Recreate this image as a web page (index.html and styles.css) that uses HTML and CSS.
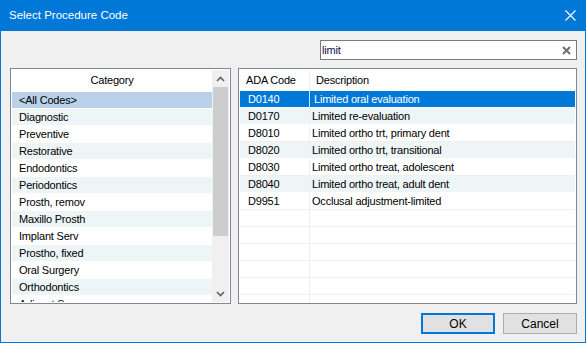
FILE: index.html
```html
<!DOCTYPE html>
<html lang="en">
<head>
    <meta charset="UTF-8">
    <title>Select Procedure Code</title>
    <link rel="stylesheet" href="styles.css">
</head>
<body>
    <div class="window">
        <div class="titlebar">
            <span class="title">Select Procedure Code</span>
            <svg class="close" width="11" height="11" viewBox="0 0 11 11">
                <path d="M0.5 0.5 L10.5 10.5 M10.5 0.5 L0.5 10.5" stroke="#fff" stroke-width="1.1"/>
            </svg>
        </div>

        <div class="content">
            <div class="searchRow">
                <div class="search">
                    <span class="searchText">limit</span>
                    <svg class="clear" width="9" height="9" viewBox="0 0 9 9">
                        <path d="M1 1 L8 8 M8 1 L1 8" stroke="#6e6e6e" stroke-width="2"/>
                    </svg>
                </div>
            </div>

            <div class="panels">
                <div class="panel categories">
                    <div class="catList">
                        <div class="catHeader">Category</div>
                        <div class="catRow selected">&lt;All Codes&gt;</div>
                        <div class="catRow alt">Diagnostic</div>
                        <div class="catRow">Preventive</div>
                        <div class="catRow alt">Restorative</div>
                        <div class="catRow">Endodontics</div>
                        <div class="catRow alt">Periodontics</div>
                        <div class="catRow">Prosth, remov</div>
                        <div class="catRow alt">Maxillo Prosth</div>
                        <div class="catRow">Implant Serv</div>
                        <div class="catRow alt">Prostho, fixed</div>
                        <div class="catRow">Oral Surgery</div>
                        <div class="catRow alt">Orthodontics</div>
                        <div class="catRow">Adjunct Serv</div>
                    </div>
                    <div class="scrollbar">
                        <div class="arrow">
                            <svg width="9" height="6" viewBox="0 0 9 6"><path d="M1 5 L4.5 1.5 L8 5" fill="none" stroke="#606060" stroke-width="1.6"/></svg>
                        </div>
                        <div class="track"><div class="thumb"></div></div>
                        <div class="arrow">
                            <svg width="9" height="6" viewBox="0 0 9 6"><path d="M1 1 L4.5 4.5 L8 1" fill="none" stroke="#606060" stroke-width="1.6"/></svg>
                        </div>
                    </div>
                </div>

                <div class="panel codes">
                    <div class="codeHeader">
                        <div class="colCode">ADA Code</div>
                        <div class="colDesc">Description</div>
                    </div>
                    <div class="codeRow selected"><div class="colCode">D0140</div><div class="colDesc">Limited oral evaluation</div></div>
                    <div class="codeRow alt"><div class="colCode">D0170</div><div class="colDesc">Limited re-evaluation</div></div>
                    <div class="codeRow"><div class="colCode">D8010</div><div class="colDesc">Limited ortho trt, primary dent</div></div>
                    <div class="codeRow alt"><div class="colCode">D8020</div><div class="colDesc">Limited ortho trt, transitional</div></div>
                    <div class="codeRow"><div class="colCode">D8030</div><div class="colDesc">Limited ortho treat, adolescent</div></div>
                    <div class="codeRow alt"><div class="colCode">D8040</div><div class="colDesc">Limited ortho treat, adult dent</div></div>
                    <div class="codeRow"><div class="colCode">D9951</div><div class="colDesc">Occlusal adjustment-limited</div></div>
                    <div class="codeRow empty"><div class="colCode"></div><div class="colDesc"></div></div>
                    <div class="codeRow empty"><div class="colCode"></div><div class="colDesc"></div></div>
                    <div class="codeRow empty"><div class="colCode"></div><div class="colDesc"></div></div>
                    <div class="codeRow empty"><div class="colCode"></div><div class="colDesc"></div></div>
                    <div class="codeRow empty"><div class="colCode"></div><div class="colDesc"></div></div>
                    <div class="codeRow empty"><div class="colCode"></div><div class="colDesc"></div></div>
                </div>
            </div>

            <div class="buttons">
                <button class="btn default">OK</button>
                <button class="btn">Cancel</button>
            </div>
        </div>
    </div>
</body>
</html>
```

FILE: styles.css
```css
body {
    margin: 0;
    font-family: "Liberation Sans", Arial, sans-serif;
    font-size: 11px;
    letter-spacing: -0.2px;
    color: #000;
    background: #f0f0f0;
}
.window {
    width: 586px;
    height: 343px;
    box-sizing: border-box;
    border: 1px solid #0078d7;
    border-top: none;
    background: #f0f0f0;
    overflow: hidden;
}
.titlebar {
    height: 31px;
    background: #0078d7;
    display: flex;
    align-items: center;
    justify-content: space-between;
    padding: 0 9px 1px 8px;
    box-sizing: border-box;
}
.title {
    color: #fff;
    font-size: 11.5px;
    letter-spacing: 0;
}
.content {
    padding: 9px 8px 0 9px;
}
.searchRow {
    display: flex;
    justify-content: flex-end;
    margin-bottom: 8px;
}
.search {
    width: 257px;
    height: 20px;
    box-sizing: border-box;
    border: 1px solid #7a7a7a;
    background: #fff;
    display: flex;
    align-items: center;
    justify-content: space-between;
    padding: 0 5px 0 1px;
}
.searchText {
    color: #10104a;
}
.panels {
    display: flex;
    gap: 7px;
    height: 236px;
}
.panel {
    box-sizing: border-box;
    border: 1px solid #828790;
    background: #fff;
    padding: 1px;
    overflow: hidden;
}
.categories {
    width: 221px;
    display: flex;
}
.catList {
    width: 200px;
    overflow: hidden;
}
.catHeader {
    height: 22px;
    line-height: 20px;
    text-align: center;
}
.catRow {
    height: 16px;
    line-height: 16px;
    border-bottom: 1px solid #fff;
    padding-left: 7px;
    white-space: nowrap;
}
.catRow.alt {
    background: #edf5f7;
}
.catRow.selected {
    background: #bad1ea;
}
.scrollbar {
    width: 17px;
    background: #f0f0f0;
    display: flex;
    flex-direction: column;
}
.arrow {
    height: 17px;
    display: flex;
    align-items: center;
    justify-content: center;
}
.track {
    flex: 1;
    padding: 0 1px;
}
.thumb {
    height: 149px;
    background: #cdcdcd;
}
.codes {
    width: 339px;
}
.codeHeader {
    display: flex;
    height: 21px;
    line-height: 20px;
}
.codeHeader .colCode {
    padding-left: 6px;
}
.codeHeader .colDesc {
    padding-left: 6px;
}
.codeRow {
    display: flex;
    height: 16px;
    line-height: 16px;
    border-bottom: 1px solid #f0f0f0;
    white-space: nowrap;
}
.colCode {
    width: 70px;
    flex-shrink: 0;
    border-right: 1px solid #f0f0f0;
    padding-left: 8px;
    box-sizing: border-box;
}
.colDesc {
    flex: 1;
    padding-left: 2px;
}
.codeRow.alt {
    background: #edf5f7;
    border-bottom-color: #fff;
}
.codeRow.selected {
    background: #0078d7;
    color: #fff;
    border-bottom-color: #fff;
}
.codeRow.selected .colCode {
    border-right-color: #cfe3f5;
}
.codeRow.selected .colDesc {
    padding-left: 4px;
}
.buttons {
    display: flex;
    justify-content: flex-end;
    gap: 8px;
    margin-top: 9px;
}
.btn {
    width: 74px;
    height: 21px;
    box-sizing: border-box;
    border: 1px solid #adadad;
    background: #e1e1e1;
    font-family: "Liberation Sans", Arial, sans-serif;
    font-size: 12px;
    color: #000;
    padding: 0;
}
.btn.default {
    border: 2px solid #0078d7;
}
```
